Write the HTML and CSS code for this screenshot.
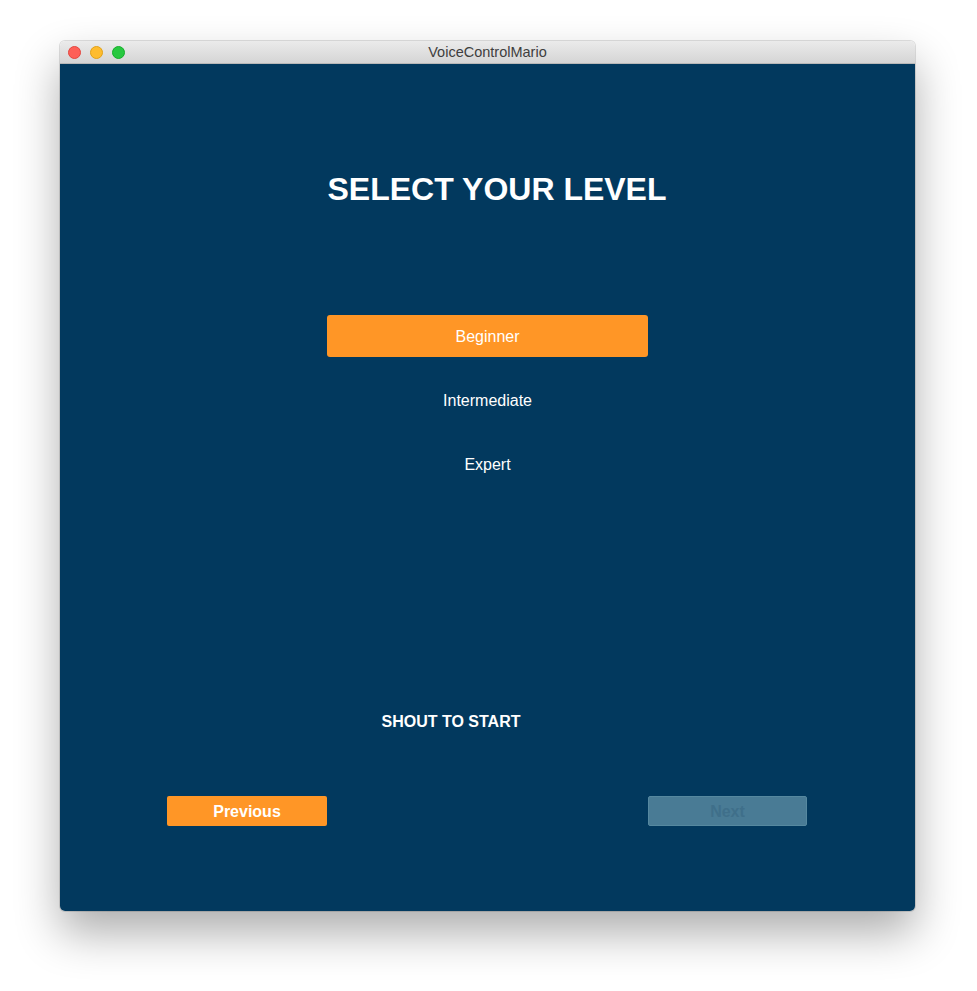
FILE: index.html
```html
<!DOCTYPE html>
<html>
<head>
<meta charset="utf-8">
<title>VoiceControlMario</title>
<link rel="stylesheet" href="styles.css">
</head>
<body>
<div class="window">
  <div class="titlebar">
    <div class="lights">
      <span class="light red"></span>
      <span class="light yellow"></span>
      <span class="light green"></span>
    </div>
    <div class="wtitle">VoiceControlMario</div>
  </div>
  <div class="content">
    <h1 class="heading">SELECT YOUR LEVEL</h1>
    <div class="levels">
      <div class="level selected">Beginner</div>
      <div class="level">Intermediate</div>
      <div class="level">Expert</div>
    </div>
    <div class="shout">SHOUT TO START</div>
    <div class="nav">
      <button class="navbtn prev">Previous</button>
      <button class="navbtn next" disabled>Next</button>
    </div>
  </div>
</div>
</body>
</html>
```
FILE: styles.css
```css
html, body {
  margin: 0;
  padding: 0;
  background: #ffffff;
}
body {
  padding: 41px 0 0 60px;
  height: 991px;
  box-sizing: border-box;
  font-family: "Liberation Sans", Arial, sans-serif;
}
.window {
  width: 855px;
  height: 870px;
  border-radius: 5px;
  overflow: hidden;
  display: flex;
  flex-direction: column;
  box-shadow: 0 22px 45px rgba(0,0,0,0.32), 0 0 0 1px rgba(0,0,0,0.12);
}
.titlebar {
  height: 22px;
  flex: none;
  background: linear-gradient(#ebebeb, #d5d5d5);
  border-bottom: 1px solid #b8b8b8;
  position: relative;
  display: flex;
  align-items: center;
  justify-content: center;
}
.lights {
  position: absolute;
  left: 8px;
  top: 5px;
  display: flex;
  gap: 9px;
}
.light {
  width: 13px;
  height: 13px;
  border-radius: 50%;
  box-sizing: border-box;
}
.red { background: #fe5f57; border: 1px solid #e2463f; }
.yellow { background: #febc2e; border: 1px solid #e1a116; }
.green { background: #28c840; border: 1px solid #14ae2a; }
.wtitle {
  font-size: 14.5px;
  color: #3e3e3e;
  line-height: 22px;
}
.content {
  flex: 1;
  background: #02395e;
  display: flex;
  flex-direction: column;
  align-items: center;
}
.heading {
  margin: 107px 0 0 0;
  padding-left: 19px;
  font-size: 32px;
  line-height: 37px;
  font-weight: bold;
  color: #ffffff;
  text-align: center;
}
.levels {
  margin-top: 107px;
  display: flex;
  flex-direction: column;
  gap: 22px;
  width: 321px;
}
.level {
  height: 42px;
  display: flex;
  align-items: center;
  justify-content: center;
  font-size: 16px;
  color: #ffffff;
  border-radius: 3px;
  padding-top: 1px;
  box-sizing: border-box;
}
.level.selected {
  background: #ff9626;
}
.shout {
  margin-top: 228px;
  padding-right: 73px;
  font-size: 16px;
  line-height: 18px;
  font-weight: bold;
  color: #ffffff;
}
.nav {
  margin-top: 65px;
  width: 100%;
  box-sizing: border-box;
  padding: 0 108px 0 107px;
  display: flex;
  justify-content: space-between;
}
.navbtn {
  width: 160px;
  height: 30px;
  border-radius: 2px;
  font-family: "Liberation Sans", Arial, sans-serif;
  font-size: 16px;
  font-weight: bold;
  padding: 1px 0 0 0;
  border: none;
}
.prev {
  background: #ff9626;
  color: #ffffff;
}
.next {
  width: 159px;
  background: #497b95;
  border: 1px solid #56889f;
  color: #3f6f8a;
}
```
